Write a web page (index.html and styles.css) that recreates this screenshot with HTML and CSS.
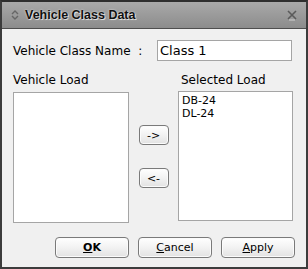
FILE: index.html
```html
<!DOCTYPE html>
<html>
<head>
	<title>Vehicle Class Data</title>
	<meta charset="UTF-8">
	<link rel="stylesheet" href="styles.css">
</head>
<body>
	<div class="window">
		<div class="titlebar">
			<div class="title-icon">
				<svg viewBox="0 0 8 12" width="8" height="12">
					<path d="M1 5 L4 2 L7 5" fill="none" stroke="#666" stroke-width="1.4"/>
					<path d="M1 7 L4 10 L7 7" fill="none" stroke="#666" stroke-width="1.4"/>
				</svg>
			</div>
			<div class="title-text">Vehicle Class Data</div>
			<div class="title-close">
				<svg viewBox="0 0 12 12" width="12" height="12">
					<path d="M2 2 L10 10 M10 2 L2 10" fill="none" stroke="#5a5a5a" stroke-width="1.6"/>
					<path d="M3 11 L9 11" stroke="#cfcfcf" stroke-width="1"/>
				</svg>
			</div>
		</div>

		<div class="content">
			<div class="name-row">
				<label class="name-label">Vehicle Class Name &nbsp;:</label>
				<div class="textbox">Class 1</div>
			</div>

			<div class="load-grid">
				<div class="load-label">Vehicle Load</div>
				<div></div>
				<div class="load-label selected">Selected Load</div>

				<div class="listbox left"></div>
				<div class="move-buttons">
					<button class="btn small">-&gt;</button>
					<button class="btn small">&lt;-</button>
				</div>
				<div class="listbox right">
					<div class="list-item">DB-24</div>
					<div class="list-item">DL-24</div>
				</div>
			</div>

			<div class="dialog-buttons">
				<button class="btn wide bold"><u>O</u>K</button>
				<button class="btn wide"><u>C</u>ancel</button>
				<button class="btn wide"><u>A</u>pply</button>
			</div>
		</div>
	</div>
</body>
</html>
```

FILE: styles.css
```css
body {
	margin: 0;
	background: #f0f0f0;
	font-family: 'DejaVu Sans', 'Liberation Sans', sans-serif;
}

.window {
	width: 308px;
	height: 269px;
	box-sizing: border-box;
	border: 2px solid #3c3c3c;
	border-top-color: #2e2e2e;
	background: #f0f0f0;
	display: flex;
	flex-direction: column;
}

.titlebar {
	height: 26px;
	display: flex;
	align-items: center;
	background: linear-gradient(#a9a9a9, #8c8c8c);
	border-bottom: 1px solid #4e4e4e;
	padding: 0 8px 0 9px;
}

.title-icon svg {
	display: block;
}

.title-text {
	margin-left: 6px;
	font-family: 'Liberation Sans', sans-serif;
	font-weight: bold;
	font-size: 12.5px;
	color: #111;
	text-shadow: 0 0 2px #e8e8e8, 1px 1px 0 #d8d8d8;
	flex-grow: 1;
}

.title-close svg {
	display: block;
}

.content {
	flex-grow: 1;
	padding: 11px 11px 0 11px;
	display: flex;
	flex-direction: column;
	font-size: 12px;
	color: #000;
}

.name-row {
	display: flex;
	align-items: center;
	height: 21px;
}

.name-label {
	width: 144px;
}

.textbox {
	width: 135px;
	height: 21px;
	box-sizing: border-box;
	border: 1px solid #a5a5a5;
	background: #fff;
	padding: 2px 2px;
	font-size: 13px;
}

.load-grid {
	display: grid;
	grid-template-columns: 116px 49px 115px;
	grid-template-rows: 19px 131px;
	margin-top: 12px;
}

.load-label {
	font-size: 12px;
}

.load-label.selected {
	padding-left: 3px;
}

.listbox {
	box-sizing: border-box;
	border: 1px solid #a5a5a5;
	background: #fff;
}

.listbox.right {
	height: 130px;
	margin-top: -1px;
	padding: 2px 3px;
	font-size: 11px;
	line-height: 13px;
}

.move-buttons {
	display: flex;
	flex-direction: column;
	align-items: center;
	gap: 23px;
	padding-top: 33px;
}

.btn {
	font-family: 'DejaVu Sans', sans-serif;
	font-size: 11px;
	color: #000;
	border: 1px solid #7a7a7a;
	border-radius: 4px;
	background: linear-gradient(#ffffff, #f2f2f2 50%, #e2e2e2);
	padding: 0;
	box-shadow: inset 0 0 0 1px #fbfbfb;
}

.btn.small {
	width: 30px;
	height: 20px;
}

.btn.wide {
	width: 74px;
	height: 21px;
}

.btn.bold {
	font-weight: bold;
}

.dialog-buttons {
	display: flex;
	justify-content: flex-end;
	gap: 9px;
	margin-top: 14px;
}
```
